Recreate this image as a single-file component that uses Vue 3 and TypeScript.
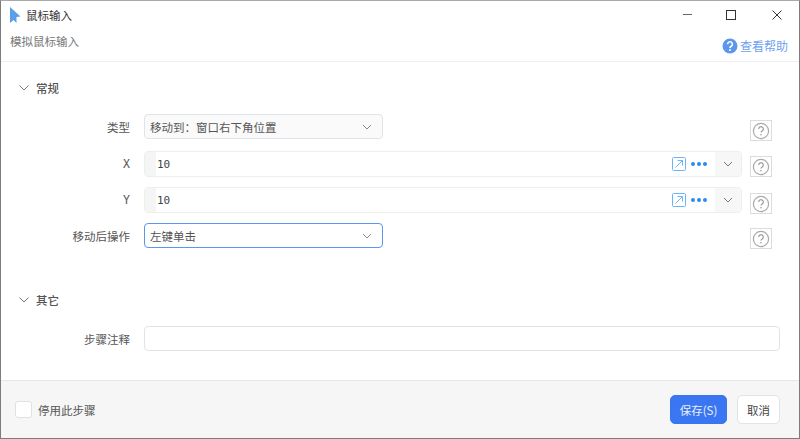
<script setup lang="ts">
interface Row { label: string; kind: 'plain' | 'stepper'; value: string; focus?: boolean }
const rows: Row[] = [
  { label: '类型', kind: 'plain', value: '移动到：窗口右下角位置' },
  { label: 'X', kind: 'stepper', value: '10' },
  { label: 'Y', kind: 'stepper', value: '10' },
  { label: '移动后操作', kind: 'plain', value: '左键单击', focus: true },
]
</script>

<template>
  <div class="win">
    <header class="titlebar">
      <svg class="cursor" width="11" height="17" viewBox="0 0 11 17"><path d="M0 0 L10.5 9.5 L6.5 10 L6.5 16 L3.5 13 L0 16 Z" fill="#5b9fe8" /></svg>
      <span class="title">鼠标输入</span>
      <div class="controls">
        <svg width="12" height="12" viewBox="0 0 12 12"><path d="M2 5.5H11" stroke="#666" fill="none" /></svg>
        <svg width="12" height="12" viewBox="0 0 12 12"><rect x="1.5" y="1.5" width="9" height="9" stroke="#333" fill="none" /></svg>
        <svg class="close" width="12" height="12" viewBox="0 0 12 12"><path d="M1.5 1.5L10.5 10.5M10.5 1.5L1.5 10.5" stroke="#333" fill="none" /></svg>
      </div>
    </header>
    <div class="subbar">
      <span class="sub">模拟鼠标输入</span>
      <a class="help-link">
        <svg width="16" height="16" viewBox="0 0 16 16"><circle cx="8" cy="8" r="7.5" fill="#5b97ec" /><path d="M5.6 6.2a2.4 2.4 0 1 1 3.6 2.1c-.8.5-1.2.9-1.2 1.7" stroke="#fff" stroke-width="1.6" fill="none" /><circle cx="8" cy="12.1" r="1" fill="#fff" /></svg>
        查看帮助
      </a>
    </div>

    <main class="body">
      <div class="section-head">
        <svg class="chev" width="12" height="8" viewBox="0 0 12 8"><path d="M1.5 1.5L6 6L10.5 1.5" stroke="#777" fill="none" /></svg>
        <span>常规</span>
      </div>
      <div class="rows">
        <div v-for="r in rows" :key="r.label" class="row" :class="'row-' + r.kind">
          <label class="label" :class="{ mono: r.label.length === 1 }">{{ r.label }}</label>
          <div v-if="r.kind === 'plain'" class="select" :class="{ focus: r.focus }">
            <span>{{ r.value }}</span>
            <svg width="10" height="6" viewBox="0 0 10 6"><path d="M1 1L5 5L9 1" stroke="#888" fill="none" /></svg>
          </div>
          <div v-else class="combo">
            <span class="stub"></span>
            <span class="val">{{ r.value }}</span>
            <svg class="expand" width="14" height="14" viewBox="0 0 14 14"><rect x=".5" y=".5" width="13" height="13" rx="1" stroke="#6db4f7" fill="none" /><path d="M3.5 10.5L10.5 3.5M5.5 3.5H10.5V8.5" stroke="#6db4f7" fill="none" /></svg>
            <span class="dots"><i></i><i></i><i></i></span>
            <span class="drop"><svg width="10" height="6" viewBox="0 0 10 6"><path d="M1 1L5 5L9 1" stroke="#777" fill="none" /></svg></span>
          </div>
          <span class="q">
            <svg width="18" height="18" viewBox="0 0 18 18"><circle cx="9" cy="9" r="7.6" stroke="#aaa" stroke-width="1.2" fill="none" /><path d="M6.7 7a2.3 2.3 0 1 1 3.5 2c-.8.5-1.2.9-1.2 1.6" stroke="#999" stroke-width="1.2" fill="none" /><circle cx="9" cy="12.8" r=".8" fill="#999" /></svg>
          </span>
        </div>
      </div>

      <div class="section-head second">
        <svg class="chev" width="12" height="8" viewBox="0 0 12 8"><path d="M1.5 1.5L6 6L10.5 1.5" stroke="#777" fill="none" /></svg>
        <span>其它</span>
      </div>
      <div class="row note">
        <label class="label">步骤注释</label>
        <div class="input"></div>
      </div>
    </main>

    <footer class="footer">
      <span class="check"></span>
      <span class="check-label">停用此步骤</span>
      <button class="btn primary">保存(S)</button>
      <button class="btn">取消</button>
    </footer>
  </div>
</template>

<style>
html, body { margin: 0; background: #fff; }
</style>

<style scoped>
.win {
  width: 800px; height: 439px; box-sizing: border-box;
  border: 1px solid #7c7c7c; border-top-color: #a8a8a8;
  background: #fff; display: flex; flex-direction: column;
  font-family: "Noto Sans CJK SC", "Liberation Sans", sans-serif;
  font-size: 11.5px; color: #444; overflow: hidden;
}
.titlebar { height: 30px; flex: none; display: flex; align-items: center; padding-left: 9px; }
.cursor { margin-right: 5px; margin-top: -2px; }
.title { color: #333; margin-top: -2px; }
.controls { margin-left: auto; display: flex; gap: 32px; padding-right: 16px; align-self: flex-start; margin-top: 8px; }
.close { margin-left: 2px; }
.subbar { height: 31px; flex: none; box-sizing: border-box; border-bottom: 1px solid #eeeeee; display: flex; align-items: flex-start; padding: 1px 11px 0 9px; }
.sub { color: #777; line-height: 18px; }
.help-link { margin-left: auto; display: flex; align-items: center; gap: 2px; color: #6ea2ee; line-height: 18px; margin-top: 5px; font-size: 12px; }
.body { flex: 1; display: flex; flex-direction: column; min-height: 0; }
.section-head { display: flex; align-items: center; gap: 6px; padding-left: 17px; margin-top: 16px; height: 20px; color: #555; font-weight: 500; }
.section-head.second { margin-top: 42px; }
.rows { display: flex; flex-direction: column; gap: 10px; margin-top: 16px; }
.row { display: flex; align-items: center; padding-right: 27px; }
.row-plain { height: 25px; }
.row-plain:first-child { margin-bottom: 2px; }
.row-stepper { height: 26px; }
.label { width: 129px; flex: none; text-align: right; margin-right: 14px; color: #555; }
.label.mono { font-family: "DejaVu Sans Mono", monospace; }
.select {
  width: 239px; height: 25px; box-sizing: border-box; flex: none;
  border: 1px solid #e0e3e8; border-radius: 4px; background: #fafafa;
  display: flex; align-items: center; justify-content: space-between;
  padding: 0 10px 0 5px; color: #555;
}
.select.focus { border-color: #5a95f0; background: #fff; }
.combo {
  flex: 1; height: 26px; box-sizing: border-box;
  border: 1px solid #eceef0; border-radius: 4px;
  display: flex; align-items: center; overflow: hidden;
}
.stub { width: 11px; height: 100%; background: #f5f5f5; flex: none; }
.val { flex: 1; padding-left: 1px; font-family: "DejaVu Sans Mono", monospace; font-size: 11px; color: #444; }
.expand { margin-right: 5px; margin-top: -1px; }
.dots { display: flex; gap: 2px; margin-right: 8px; margin-top: -1px; }
.dots i { width: 4px; height: 4px; border-radius: 50%; background: #2b8cf0; }
.drop { width: 26px; height: 100%; background: #f7f7f7; display: flex; align-items: center; justify-content: center; }
.q {
  width: 22px; height: 21px; box-sizing: border-box; flex: none;
  border: 1px solid #dcdcdc; margin-left: 8px; align-self: flex-start; margin-top: 5px;
  display: flex; align-items: center; justify-content: center;
}
.row-plain .q { margin-left: 367px; }
.row:first-child .q, .row:nth-child(3) .q { margin-top: 6px; }
.row.note { margin-top: 16px; padding-right: 19px; }
.input { flex: 1; height: 25px; box-sizing: border-box; border: 1px solid #e0e3e8; border-radius: 4px; }
.footer {
  height: 58px; flex: none; box-sizing: border-box;
  background: #f6f6f6; border-top: 1px solid #e4e6ea;
  display: flex; align-items: center; padding: 0 19px 0 14px; margin-top: auto;
}
.check { width: 17px; height: 17px; box-sizing: border-box; border: 1px solid #dfe1e5; border-radius: 3px; background: #fff; margin-right: 6px; }
.check-label { color: #555; }
.btn {
  height: 29px; width: 43px; box-sizing: border-box; padding: 0;
  border: 1px solid #e0e3e8; border-radius: 5px; background: #fff;
  font: inherit; color: #444; margin-left: 10px;
}
.btn.primary { margin-left: auto; width: 57px; background: #3a76f2; border-color: #3a76f2; color: #e8f0ff; }
</style>
